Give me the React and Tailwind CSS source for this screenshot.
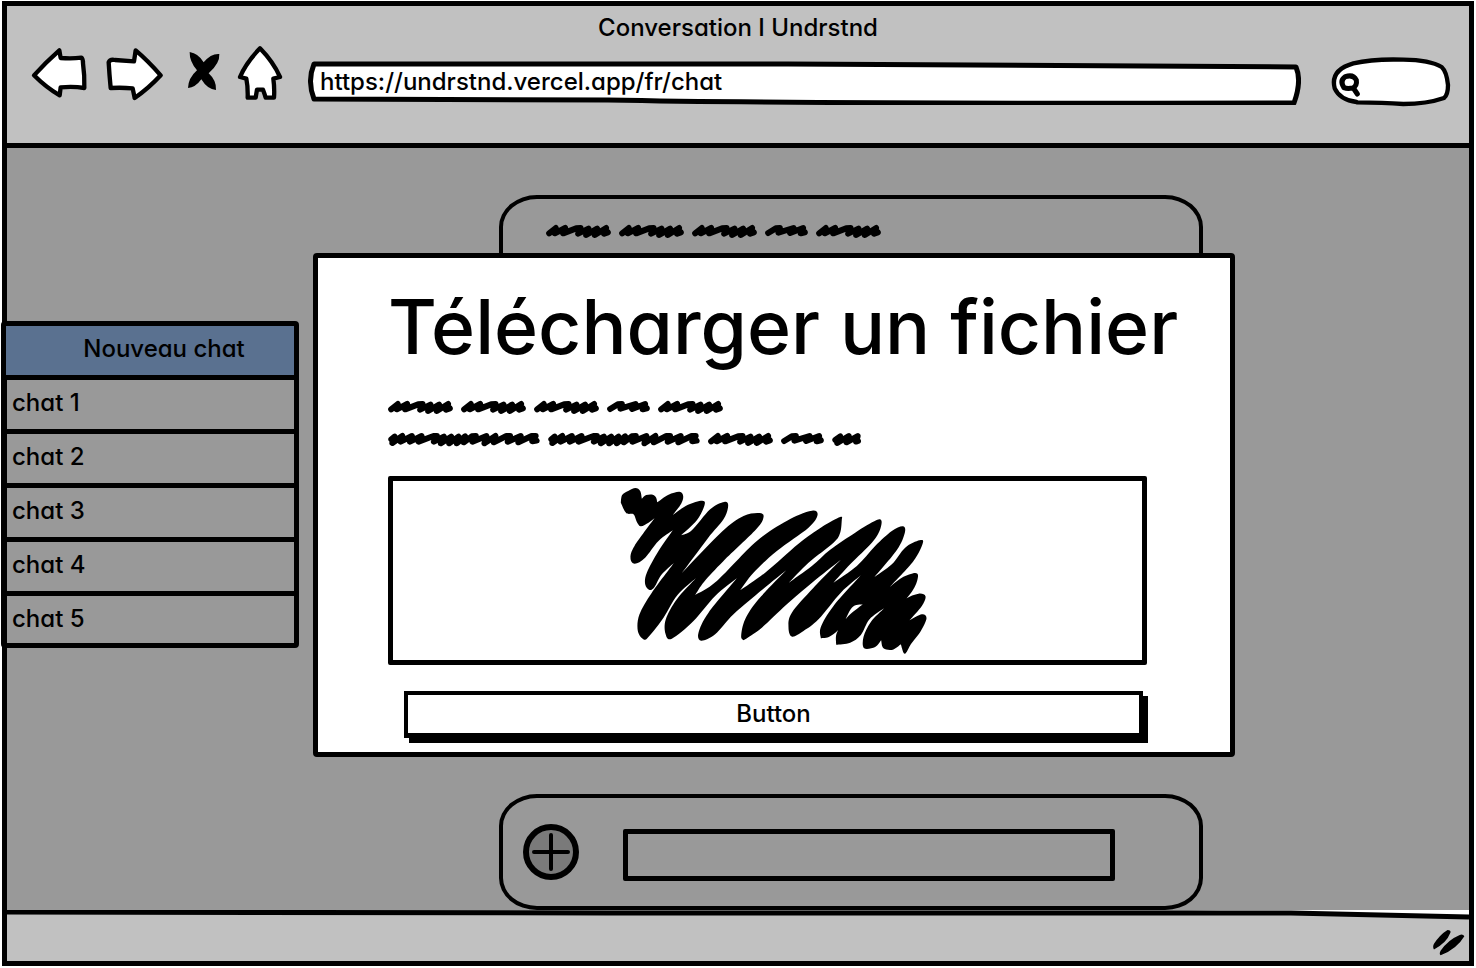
import React from 'react';

const words = {
  medium: { width: 194, d: 'M9 28 L29 12 L26 28 L57 12 L51 28 L90 13 L103 12 L96 29 L127 14 L120 33 L153 14 L146 33 L180 12 L174 29 L185 25' },
  short: { width: 128, d: 'M9 27 L32 13 L44 12 L40 26 L85 12 L75 27 L114 12 L107 28 L119 25' },
  long: {
    width: 457,
    d: 'M10 22 L20 14 L13 33 L43 12 L38 29 L72 12 L66 29 L101 12 L92 29 L137 12 L147 12 L138 29 L168 14 L159 34 L190 14 L184 34 L212 14 L207 34 L232 13 L228 31 L252 13 L264 12 L254 29 L296 12 L290 34 L323 12 L318 31 L356 12 L367 12 L360 29 L399 12 L392 31 L432 12 L444 12 L434 28 L447 26',
  },
  tiny: { width: 88, d: 'M10 24 L25 13 L16 33 L51 12 L44 31 L78 12 L73 29 L79 27' },
};

function ScribbleLine({ items }) {
  return (
    <div className="flex h-4 gap-2" aria-hidden="true">
      {items.map((name, i) => (
        <svg
          key={i}
          viewBox={`0 0 ${words[name].width} 48`}
          style={{ width: Math.round(words[name].width / 3) }}
          className="h-4 shrink-0 overflow-visible"
        >
          <path d={words[name].d} fill="none" stroke="#000" strokeWidth="18" strokeLinecap="round" strokeLinejoin="round" />
        </svg>
      ))}
    </div>
  );
}

/* Each run is a smooth edge; runs meet in sharp notches or tips. */
const scrawl = [
  [62, 95, 66, 72, 84, 60, 106, 51, 120, 60, 125, 83],
  [125, 83, 138, 72, 158, 71, 168, 80, 171, 94],
  [171, 94, 205, 71, 238, 62, 249, 75, 243, 98, 218, 132],
  [218, 132, 262, 102, 306, 89, 313, 103, 290, 148, 243, 193],
  [243, 193, 275, 178, 330, 115, 372, 93, 384, 104, 370, 145, 322, 203, 240, 312, 200, 353],
  [200, 353, 260, 290, 365, 182, 430, 135, 478, 126, 490, 139, 468, 175, 370, 270, 312, 332, 285, 372],
  [285, 372, 350, 330, 470, 210, 570, 144, 636, 119, 652, 133, 625, 170, 530, 240, 460, 305, 420, 358],
  [420, 358, 495, 305, 595, 218, 665, 168, 720, 138, 725, 146],
  [725, 146, 720, 185, 700, 215, 625, 275, 566, 335],
  [566, 335, 635, 285, 690, 236, 765, 185, 828, 148, 844, 150, 838, 180, 815, 215, 750, 280, 700, 335],
  [700, 335, 770, 285, 825, 225, 875, 180, 908, 166, 914, 185, 890, 237, 823, 318],
  [823, 318, 875, 280, 915, 230, 958, 208, 968, 216, 940, 270, 870, 347],
  [870, 347, 905, 320, 945, 306, 953, 320, 935, 362, 878, 428],
  [878, 428, 915, 385, 955, 368, 976, 376, 965, 405, 928, 448],
  [928, 448, 965, 430, 979, 442, 962, 480, 932, 520, 920, 542, 911, 547, 902, 520],
  [902, 520, 878, 536, 850, 532, 843, 508],
  [843, 508, 825, 528, 792, 532, 790, 498, 812, 453, 852, 412],
  [852, 412, 808, 445, 782, 492, 750, 515, 708, 521],
  [708, 521, 710, 485, 740, 440, 788, 400],
  [788, 400, 755, 410, 725, 465, 690, 496, 662, 502],
  [662, 502, 662, 468, 700, 405, 782, 313],
  [782, 313, 722, 365, 655, 445, 610, 480, 576, 497, 565, 470, 575, 425, 640, 350, 722, 266],
  [722, 266, 648, 325, 560, 400, 485, 470, 430, 508],
  [430, 508, 423, 495, 435, 445, 475, 385, 558, 298],
  [558, 298, 488, 355, 400, 430, 345, 490, 303, 509, 295, 485, 325, 425, 410, 322],
  [410, 322, 345, 375, 280, 450, 215, 503, 196, 488, 197, 445, 230, 385, 287, 322],
  [287, 322, 232, 372, 190, 440, 150, 492, 132, 506, 113, 480, 118, 430, 155, 365, 222, 275],
  [222, 275, 185, 310, 163, 348, 148, 357, 135, 340, 140, 305, 175, 240, 218, 178],
  [218, 178, 175, 210, 135, 260, 104, 278, 91, 262, 103, 225, 163, 142],
  [163, 142, 145, 155, 122, 166, 110, 153, 100, 130, 78, 126, 62, 95],
];

function toPath(runs) {
  let d = `M${runs[0][0]} ${runs[0][1]}`;
  runs.forEach((run) => {
    const pts = [];
    for (let i = 0; i < run.length; i += 2) pts.push([run[i], run[i + 1]]);
    for (let i = 0; i < pts.length - 1; i += 1) {
      const a = pts[i - 1] || pts[i];
      const b = pts[i];
      const c = pts[i + 1];
      const e = pts[i + 2] || c;
      d += `C${b[0] + (c[0] - a[0]) / 6} ${b[1] + (c[1] - a[1]) / 6} ${c[0] - (e[0] - b[0]) / 6} ${c[1] - (e[1] - b[1]) / 6} ${c[0]} ${c[1]}`;
    }
  });
  return `${d}Z`;
}

const ink = { fill: '#fff', stroke: '#000', strokeWidth: 13, strokeLinejoin: 'round', strokeLinecap: 'round' };

function BrowserBar() {
  return (
    <header className="h-[142px] shrink-0 border-b-5 border-black bg-[#c1c1c1]">
      <h1 className="pt-1 text-center text-2xl leading-9">Conversation I Undrstnd</h1>
      <div className="flex items-start pr-[18px] pl-6">
        <nav className="flex shrink-0" aria-label="Navigation">
          <button type="button" aria-label="Back" className="mr-[18px]">
            <svg viewBox="93 138 168 168" className="h-14 w-14">
              <path {...ink} d="M102 226 Q136 188 178 151 L182 174 Q215 177 244 173 Q249 176 249 190 Q254 225 253 264 Q220 258 182 262 L179 286 Q140 264 102 226Z" />
            </svg>
          </button>
          <button type="button" aria-label="Forward" className="mr-6">
            <svg viewBox="315 138 174 168" className="h-14 w-[58px]">
              <path {...ink} d="M326 187 Q330 177 345 180 L402 184 L407 151 Q444 182 482 226 Q445 266 404 294 L398 265 Q365 262 332 264 Q328 222 326 187Z" />
            </svg>
          </button>
          <button type="button" aria-label="Stop" className="mr-[15px]">
            <svg viewBox="561 138 102 168" className="h-14 w-[34px]">
              <path d="M569 156 Q595 160 611 187 Q633 160 658 162 Q660 190 626 220 Q650 242 648 270 Q622 268 604 238 Q586 263 564 264 Q565 234 591 211 Q568 184 569 156Z" />
            </svg>
          </button>
          <button type="button" aria-label="Home" className="mr-6">
            <svg viewBox="708 138 144 168" className="h-14 w-12">
              <path {...ink} d="M780 145 Q820 186 840 231 L820 236 Q824 265 822 293 L797 293 Q794 282 789 269 L771 269 L767 293 L743 293 Q744 260 739 236 L720 231 Q738 188 780 145Z" />
            </svg>
          </button>
        </nav>
        <div className="relative mt-[15px] mr-[30px] h-11 min-w-0 flex-1">
          <svg viewBox="0 0 993 44" preserveAspectRatio="none" className="absolute inset-0 h-full w-full" aria-hidden="true">
            <path d="M6 3 Q200 4 480 3 L988 6 Q994 20 986 42 Q500 43 300 39 L6 38 Q-1 20 6 3Z" fill="#fff" stroke="#000" strokeWidth="5" strokeLinejoin="round" />
          </svg>
          <input
            aria-label="URL"
            defaultValue="https://undrstnd.vercel.app/fr/chat"
            className="relative block h-10 w-full bg-transparent px-3 text-2xl outline-none"
          />
        </div>
        <div className="relative mt-[11px] h-[50px] w-[120px] shrink-0">
          <svg viewBox="213 171 360 150" className="absolute inset-0 h-full w-full" aria-hidden="true">
            <path d="M290 306 Q240 300 224 265 Q210 210 280 190 Q340 176 430 179 Q510 180 545 201 Q560 215 564 255 Q564 285 552 294 Q500 312 430 312 Q370 307 290 307Z" {...ink} />
            <path d="M252 263 Q238 242 256 230 Q280 222 289 240 Q292 258 278 264 Q262 267 252 263 M280 264 L292 282" {...ink} fill="none" strokeWidth="15" />
          </svg>
          <input aria-label="Search" className="relative block h-full w-full bg-transparent pr-4 pl-9 text-xl outline-none" />
        </div>
      </div>
    </header>
  );
}

function Sidebar() {
  return (
    <aside className="relative mt-[173px] -ml-1.5 w-[298px] shrink-0 self-start rounded-sm border-5 border-black">
      <button type="button" className="block h-[49px] w-full bg-[#5a7190] pb-1 pl-7 text-center text-2xl">
        Nouveau chat
      </button>
      <ul>
        {['chat 1', 'chat 2', 'chat 3', 'chat 4', 'chat 5'].map((name) => (
          <li key={name} className="h-[54px] border-t-5 border-black last:h-[52px]">
            <a href="#chat" className="block px-1.5 text-2xl leading-[46px]">
              {name}
            </a>
          </li>
        ))}
      </ul>
    </aside>
  );
}

function UploadDialog() {
  return (
    <section
      role="dialog"
      aria-labelledby="upload-title"
      className="z-10 col-start-1 row-start-1 mt-[105px] mr-[234px] ml-3.5 self-start rounded-sm border-5 border-black bg-white pt-5 pr-13 pb-3.5 pl-[70px]"
    >
      <h2 id="upload-title" className="text-[75px] leading-[98px] whitespace-nowrap">
        Télécharger un fichier
      </h2>
      <div className="mt-6 flex flex-col gap-4">
        <ScribbleLine items={['medium', 'medium', 'medium', 'short', 'medium']} />
        <ScribbleLine items={['long', 'long', 'medium', 'short', 'tiny']} />
      </div>
      <div className="mt-7 mr-[31px] flex h-[189px] justify-center rounded-xs border-5 border-black pl-3">
        <svg viewBox="60 30 920 537" className="h-[179px] w-[307px] shrink-0" role="img" aria-label="Image">
          <path d={toPath(scrawl)} />
        </svg>
      </div>
      <button
        type="button"
        className="mt-[26px] mr-9 ml-4 block h-[47px] w-[calc(100%-51px)] border-4 border-b-5 border-black bg-white text-2xl shadow-[5px_5px_0_0_#000]"
      >
        Button
      </button>
    </section>
  );
}

function Conversation() {
  return (
    <div className="col-start-1 row-start-1 mr-[266px] ml-[200px] flex flex-col pt-[47px]">
      <div className="flex-1 rounded-[38px/32px] border-4 border-black px-[43px] pt-[25px]">
        <ScribbleLine items={['medium', 'medium', 'medium', 'short', 'medium']} />
      </div>
      <form className="mt-20 flex h-[116px] items-center rounded-[38px/32px] border-4 border-black pr-[84px] pl-5">
        <button type="button" aria-label="Ajouter" className="mr-11 shrink-0">
          <svg viewBox="0 0 56 56" className="h-14 w-14">
            <circle cx="28" cy="28" r="25" fill="#7a7a7a" stroke="#000" strokeWidth="6" />
            <path d="M28 11 V45 M11 28 H45" stroke="#000" strokeWidth="4" strokeLinecap="round" />
          </svg>
        </button>
        <input
          aria-label="Message"
          className="mt-1.5 h-[52px] min-w-0 flex-1 rounded-xs border-5 border-black bg-transparent px-3 text-2xl outline-none"
        />
      </form>
    </div>
  );
}

export default function App() {
  return (
    <div className="flex min-h-screen flex-col overflow-x-hidden bg-white px-0.5 pt-px pb-0.5 font-['Inter',sans-serif] font-medium text-black [font-feature-settings:'cv11']">
      <div className="flex flex-1 flex-col border-5 border-black">
        <BrowserBar />
        <main className="flex flex-1 bg-[#999999]">
          <Sidebar />
          <div className="grid min-w-0 flex-1 grid-cols-[minmax(0,1fr)]">
            <Conversation />
            <UploadDialog />
          </div>
        </main>
        <footer className="relative flex h-[51px] shrink-0 items-center justify-end bg-[#c1c1c1] pr-1">
          <svg viewBox="0 0 1462 10" preserveAspectRatio="none" className="absolute inset-x-0 top-0 h-2.5 w-full" aria-hidden="true">
            <path d="M1180 0 H1462 V8 Z" fill="#fff" />
            <path d="M0 2 L600 3 L1284 3 L1462 7" fill="none" stroke="#000" strokeWidth="5" />
          </svg>
          <svg viewBox="1056 868 100 80" className="mt-3.5 h-[27px] w-[33px]" aria-hidden="true">
            <path d="M1103 870 Q1114 870 1112 878 Q1100 910 1062 929 Q1057 922 1062 912 Q1080 884 1103 870Z M1140 885 Q1150 882 1154 889 Q1132 927 1082 947 Q1077 942 1082 933 Q1104 900 1140 885Z" />
          </svg>
        </footer>
      </div>
    </div>
  );
}
